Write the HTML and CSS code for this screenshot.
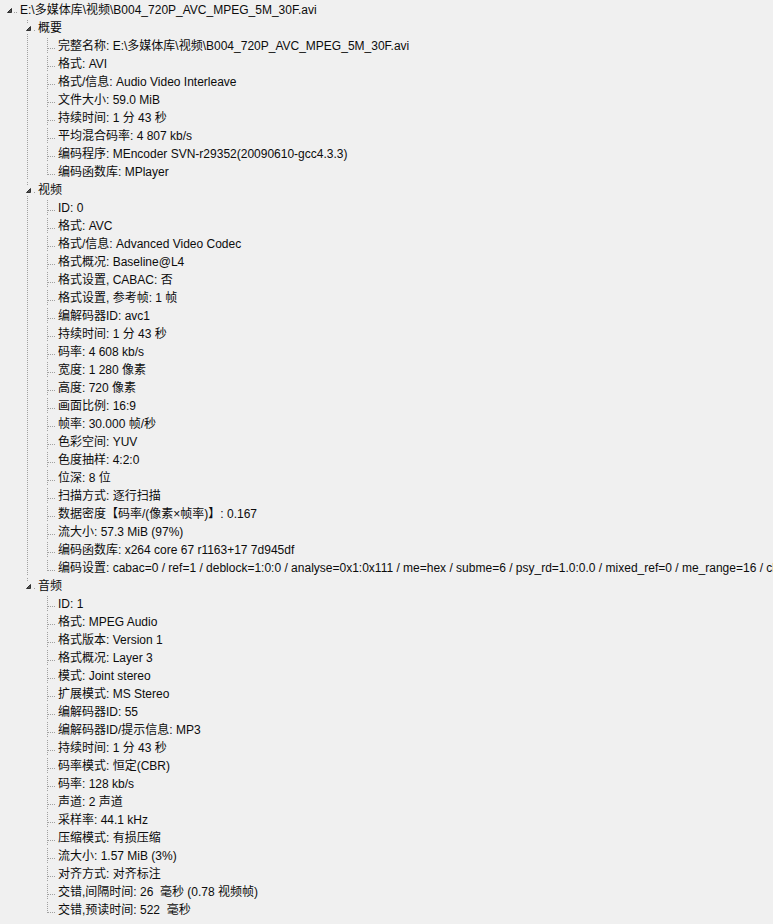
FILE: index.html
```html
<!DOCTYPE html>
<html lang="zh-CN">
<head>
<meta charset="utf-8">
<title>MediaInfo</title>
<link rel="stylesheet" href="styles.css">
</head>
<body>
<ul class="tree">
  <li class="node root">
    <div class="row"><span class="exp"><svg width="5" height="5" viewBox="0 0 5 5"><polygon points="4.5,0.5 4.5,4.5 0.5,4.5" fill="#505050" stroke="#303030" stroke-width="1"/></svg></span><span class="txt">E:\多媒体库\视频\B004_720P_AVC_MPEG_5M_30F.avi</span></div>
    <ul class="kids">
      <li class="node">
        <div class="row"><span class="exp"><svg width="5" height="5" viewBox="0 0 5 5"><polygon points="4.5,0.5 4.5,4.5 0.5,4.5" fill="#505050" stroke="#303030" stroke-width="1"/></svg></span><span class="txt">概要</span></div>
        <ul class="kids">
          <li class="leaf"><div class="row"><span class="txt">完整名称: E:\多媒体库\视频\B004_720P_AVC_MPEG_5M_30F.avi</span></div></li>
          <li class="leaf"><div class="row"><span class="txt">格式: AVI</span></div></li>
          <li class="leaf"><div class="row"><span class="txt">格式/信息: Audio Video Interleave</span></div></li>
          <li class="leaf"><div class="row"><span class="txt">文件大小: 59.0 MiB</span></div></li>
          <li class="leaf"><div class="row"><span class="txt">持续时间: 1 分 43 秒</span></div></li>
          <li class="leaf"><div class="row"><span class="txt">平均混合码率: 4 807 kb/s</span></div></li>
          <li class="leaf"><div class="row"><span class="txt">编码程序: MEncoder SVN-r29352(20090610-gcc4.3.3)</span></div></li>
          <li class="leaf"><div class="row"><span class="txt">编码函数库: MPlayer</span></div></li>
        </ul>
      </li>
      <li class="node">
        <div class="row"><span class="exp"><svg width="5" height="5" viewBox="0 0 5 5"><polygon points="4.5,0.5 4.5,4.5 0.5,4.5" fill="#505050" stroke="#303030" stroke-width="1"/></svg></span><span class="txt">视频</span></div>
        <ul class="kids">
          <li class="leaf"><div class="row"><span class="txt">ID: 0</span></div></li>
          <li class="leaf"><div class="row"><span class="txt">格式: AVC</span></div></li>
          <li class="leaf"><div class="row"><span class="txt">格式/信息: Advanced Video Codec</span></div></li>
          <li class="leaf"><div class="row"><span class="txt">格式概况: Baseline@L4</span></div></li>
          <li class="leaf"><div class="row"><span class="txt">格式设置, CABAC: 否</span></div></li>
          <li class="leaf"><div class="row"><span class="txt">格式设置, 参考帧: 1 帧</span></div></li>
          <li class="leaf"><div class="row"><span class="txt">编解码器ID: avc1</span></div></li>
          <li class="leaf"><div class="row"><span class="txt">持续时间: 1 分 43 秒</span></div></li>
          <li class="leaf"><div class="row"><span class="txt">码率: 4 608 kb/s</span></div></li>
          <li class="leaf"><div class="row"><span class="txt">宽度: 1 280 像素</span></div></li>
          <li class="leaf"><div class="row"><span class="txt">高度: 720 像素</span></div></li>
          <li class="leaf"><div class="row"><span class="txt">画面比例: 16:9</span></div></li>
          <li class="leaf"><div class="row"><span class="txt">帧率: 30.000 帧/秒</span></div></li>
          <li class="leaf"><div class="row"><span class="txt">色彩空间: YUV</span></div></li>
          <li class="leaf"><div class="row"><span class="txt">色度抽样: 4:2:0</span></div></li>
          <li class="leaf"><div class="row"><span class="txt">位深: 8 位</span></div></li>
          <li class="leaf"><div class="row"><span class="txt">扫描方式: 逐行扫描</span></div></li>
          <li class="leaf"><div class="row"><span class="txt">数据密度【码率/(像素×帧率)】: 0.167</span></div></li>
          <li class="leaf"><div class="row"><span class="txt">流大小: 57.3 MiB (97%)</span></div></li>
          <li class="leaf"><div class="row"><span class="txt">编码函数库: x264 core 67 r1163+17 7d945df</span></div></li>
          <li class="leaf"><div class="row"><span class="txt">编码设置: cabac=0 / ref=1 / deblock=1:0:0 / analyse=0x1:0x111 / me=hex / subme=6 / psy_rd=1.0:0.0 / mixed_ref=0 / me_range=16 / chroma_me=1 / trellis=0 / 8x8dct=0 / cqm=0 / deadzone=21,11 / chroma_qp_offset=0 / threads=3 / nr=0 / decimate=1 / mbaff=0 / bframes=0 / keyint=250 / keyint_min=25 / scenecut=40 / rc=abr / bitrate=4608 / ratetol=1.0 / qcomp=0.60 / qpmin=10 / qpmax=51 / qpstep=4 / ip_ratio=1.40 / aq=1:1.00</span></div></li>
        </ul>
      </li>
      <li class="node">
        <div class="row"><span class="exp"><svg width="5" height="5" viewBox="0 0 5 5"><polygon points="4.5,0.5 4.5,4.5 0.5,4.5" fill="#505050" stroke="#303030" stroke-width="1"/></svg></span><span class="txt">音频</span></div>
        <ul class="kids">
          <li class="leaf"><div class="row"><span class="txt">ID: 1</span></div></li>
          <li class="leaf"><div class="row"><span class="txt">格式: MPEG Audio</span></div></li>
          <li class="leaf"><div class="row"><span class="txt">格式版本: Version 1</span></div></li>
          <li class="leaf"><div class="row"><span class="txt">格式概况: Layer 3</span></div></li>
          <li class="leaf"><div class="row"><span class="txt">模式: Joint stereo</span></div></li>
          <li class="leaf"><div class="row"><span class="txt">扩展模式: MS Stereo</span></div></li>
          <li class="leaf"><div class="row"><span class="txt">编解码器ID: 55</span></div></li>
          <li class="leaf"><div class="row"><span class="txt">编解码器ID/提示信息: MP3</span></div></li>
          <li class="leaf"><div class="row"><span class="txt">持续时间: 1 分 43 秒</span></div></li>
          <li class="leaf"><div class="row"><span class="txt">码率模式: 恒定(CBR)</span></div></li>
          <li class="leaf"><div class="row"><span class="txt">码率: 128 kb/s</span></div></li>
          <li class="leaf"><div class="row"><span class="txt">声道: 2 声道</span></div></li>
          <li class="leaf"><div class="row"><span class="txt">采样率: 44.1 kHz</span></div></li>
          <li class="leaf"><div class="row"><span class="txt">压缩模式: 有损压缩</span></div></li>
          <li class="leaf"><div class="row"><span class="txt">流大小: 1.57 MiB (3%)</span></div></li>
          <li class="leaf"><div class="row"><span class="txt">对齐方式: 对齐标注</span></div></li>
          <li class="leaf"><div class="row"><span class="txt">交错,间隔时间: 26&nbsp; 毫秒 (0.78 视频帧)</span></div></li>
          <li class="leaf"><div class="row"><span class="txt">交错,预读时间: 522&nbsp; 毫秒</span></div></li>
        </ul>
      </li>
    </ul>
  </li>
</ul>
</body>
</html>
```

FILE: styles.css
```css
html, body {
  margin: 0;
  padding: 0;
  overflow: hidden;
  background: #f0f0f0;
}
body {
  width: 773px;
  height: 924px;
  font-family: "Liberation Sans", Arial, "Noto Sans CJK SC", sans-serif;
  font-size: 12px;
  color: #0c0c0c;
}
.tree, .kids {
  list-style: none;
  margin: 0;
  padding: 0;
}
.kids {
  padding-left: 20px;
}
.root > .kids {
  padding-left: 18px;
}
li {
  position: relative;
}
.row {
  height: 18px;
  display: flex;
  align-items: flex-start;
  white-space: nowrap;
  padding-left: 20px;
  position: relative;
}
/* horizontal connector */
.row::before {
  content: "";
  position: absolute;
  left: 10px;
  top: 12px;
  width: 8px;
  height: 1px;
  background: repeating-linear-gradient(to right, #a0a0a0 0 1px, transparent 1px 2px);
}
/* vertical connector among siblings */
.kids > li::before {
  content: "";
  position: absolute;
  left: 9px;
  top: 2px;
  bottom: 0;
  width: 1px;
  background: repeating-linear-gradient(to bottom, #a0a0a0 0 1px, transparent 1px 2px);
}
.kids > li:last-child::before {
  bottom: auto;
  height: 11px;
}
.exp {
  position: absolute;
  left: 4px;
  top: 5px;
  width: 11px;
  height: 11px;
  display: flex;
  align-items: center;
  justify-content: center;
  z-index: 1;
  background: #f0f0f0;
}
.root > .row > .exp {
  left: 3px;
}
.exp svg {
  display: block;
  margin-left: 1px;
}
.txt {
  display: block;
  line-height: 18px;
  padding-top: 1px;
}
```
